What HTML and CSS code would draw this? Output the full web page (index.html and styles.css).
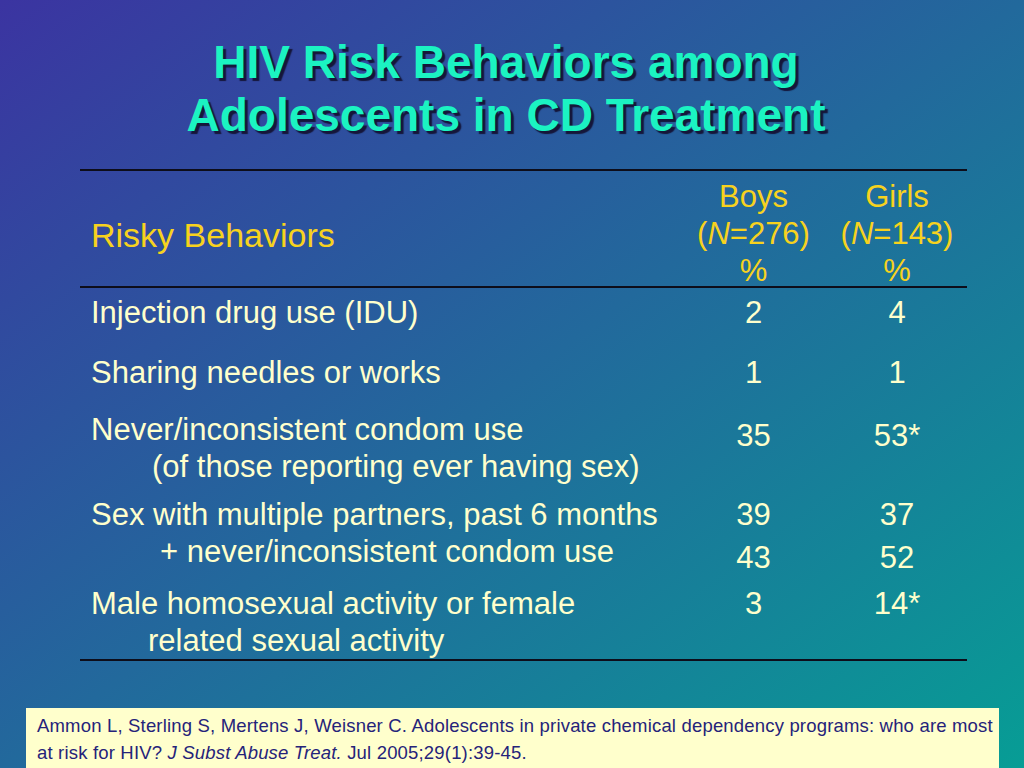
FILE: index.html
```html
<!DOCTYPE html>
<html>
<head>
<meta charset="utf-8">
<link rel="stylesheet" href="styles.css">
</head>
<body>
<div class="slide">
  <h1 class="title">HIV Risk Behaviors among<br>Adolescents in CD Treatment</h1>
  <div class="table">
    <div class="row head">
      <div class="label head-label">Risky Behaviors</div>
      <div class="num">Boys<br>(<i>N</i>=276)<br>%</div>
      <div class="num">Girls<br>(<i>N</i>=143)<br>%</div>
    </div>
    <div class="row r1">
      <div class="label">Injection drug use (IDU)</div>
      <div class="num">2</div>
      <div class="num">4</div>
    </div>
    <div class="row r2">
      <div class="label">Sharing needles or works</div>
      <div class="num">1</div>
      <div class="num">1</div>
    </div>
    <div class="row r3">
      <div class="label">Never/inconsistent condom use<span class="ind ind-a">(of those reporting ever having sex)</span></div>
      <div class="num shift">35</div>
      <div class="num shift">53*</div>
    </div>
    <div class="row r4">
      <div class="label">Sex with multiple partners, past 6 months<span class="ind ind-b">+ never/inconsistent condom use</span></div>
      <div class="num">39<span class="second">43</span></div>
      <div class="num">37<span class="second">52</span></div>
    </div>
    <div class="row r5">
      <div class="label">Male homosexual activity or female<span class="ind ind-c">related sexual activity</span></div>
      <div class="num">3</div>
      <div class="num">14*</div>
    </div>
  </div>
  <div class="ref">Ammon L, Sterling S, Mertens J, Weisner C. Adolescents in private chemical dependency programs: who are most<br>at risk for HIV? <i>J Subst Abuse Treat.</i> Jul 2005;29(1):39-45.</div>
</div>
</body>
</html>
```

FILE: styles.css
```css
html, body {
  margin: 0;
  padding: 0;
}
body {
  width: 1024px;
  height: 768px;
  overflow: hidden;
  background: linear-gradient(to bottom right, #3b34a1 0%, #22699c 50%, #079d95 100%);
  font-family: "Liberation Sans", Arial, sans-serif;
}
.slide {
  display: flex;
  flex-direction: column;
  height: 768px;
}
.title {
  margin: 0;
  padding: 36px 12px 0 0;
  text-align: center;
  font-size: 46px;
  line-height: 53px;
  font-weight: bold;
  color: #1bf3c2;
  text-shadow: 3px 3px 1px #15163a;
}
.table {
  margin: 27px 0 0 80px;
  width: 887px;
  border-top: 2px solid #0d0d1a;
  border-bottom: 2px solid #0d0d1a;
}
.row {
  display: grid;
  grid-template-columns: 600px 147px 140px;
  font-size: 31px;
  line-height: 37px;
  color: #ffffcc;
}
.label {
  padding-left: 11px;
}
.num {
  text-align: center;
}
.head {
  color: #f7d21e;
  padding-top: 7px;
  border-bottom: 2px solid #0d0d1a;
}
.head .num {
  margin-bottom: -3px;
}
.head-label {
  align-self: center;
  font-size: 34px;
  padding-top: 6px;
}
.r1 { padding-top: 6px; }
.r2 { padding-top: 23px; }
.r3 { padding-top: 20px; }
.r4 { padding-top: 11px; }
.r5 { padding-top: 9px; }
.ind {
  display: block;
}
.ind-a { padding-left: 61px; }
.ind-b { padding-left: 69px; }
.ind-c { padding-left: 57px; }
.shift { padding-top: 6px; }
.second {
  display: block;
  padding-top: 6px;
}
.ref {
  margin: 47px 0 0 26px;
  width: 951px;
  flex: 1;
  background: #ffffcc;
  padding: 4px 11px 0 11px;
  font-size: 18.5px;
  line-height: 27px;
  letter-spacing: 0.18px;
  color: #25237a;
  white-space: nowrap;
}
```
